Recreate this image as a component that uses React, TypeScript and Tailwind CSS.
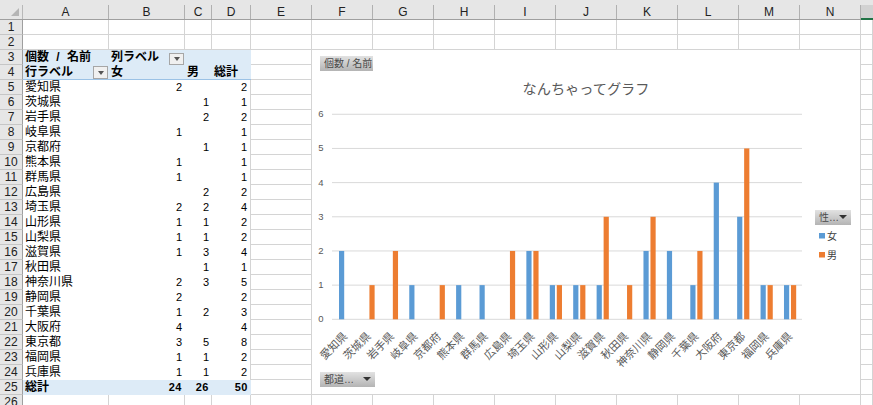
const FONT = '"Liberation Sans", "Noto Sans CJK JP", sans-serif';
const cols = ['A', 'B', 'C', 'D', 'E', 'F', 'G', 'H', 'I', 'J', 'K', 'L', 'M', 'N'];
const data: [string, number, number][] = [
  ['愛知県', 2, 0], ['茨城県', 0, 1], ['岩手県', 0, 2], ['岐阜県', 1, 0], ['京都府', 0, 1],
  ['熊本県', 1, 0], ['群馬県', 1, 0], ['広島県', 0, 2], ['埼玉県', 2, 2], ['山形県', 1, 1],
  ['山梨県', 1, 1], ['滋賀県', 1, 3], ['秋田県', 0, 1], ['神奈川県', 2, 3], ['静岡県', 2, 0],
  ['千葉県', 1, 2], ['大阪府', 4, 0], ['東京都', 3, 5], ['福岡県', 1, 1], ['兵庫県', 1, 1],
];
const GRID = 'grid grid-cols-[23px_86px_76px_27px_39px_61px_repeat(9,61px)_12px] grid-rows-[15px] h-[15px] leading-[15px]';
const line = 'border-r border-b border-[#d4d4d4]';
const total = 'bg-[#ddebf7] font-bold text-[11px] tracking-[0.5px]';

function RowNum({ n }: { n: number }) {
  return (
    <div className="bg-[#e6e6e6] border-r border-b border-r-[#9f9f9f] border-b-[#c6c6c6] text-center text-[12px] text-[#222]">
      {n}
    </div>
  );
}

function Blanks() {
  return (
    <>
      {Array.from({ length: 11 }).map((_, i) => (
        <div key={i} className={line} />
      ))}
    </>
  );
}

function FilterBtn({ cls }: { cls: string }) {
  return (
    <span className={`absolute right-[1px] w-[15px] bg-[#f0f0f0] border border-[#a6a6a6] flex items-center justify-center ${cls}`}>
      <span className="w-0 h-0 border-x-[3px] border-x-transparent border-t-[4px] border-t-[#555]" />
    </span>
  );
}

function Num({ v, cls = '' }: { v: number | string; cls?: string }) {
  return <div className={`text-right pr-[3px] text-[11px] ${cls}`}>{v === 0 ? '' : v}</div>;
}

function ChartBtn({ label, arrow, cls }: { label: string; arrow?: boolean; cls: string }) {
  return (
    <div className={`absolute h-[15px] bg-linear-to-b from-[#e2e2e2] to-[#b4b4b4] text-[#4a4a4a] text-[10px] leading-[15px] flex items-center pl-[4px] ${cls}`}>
      <span className="whitespace-pre">{label}</span>
      {arrow && (
        <span className="absolute right-[4px] top-[5px] w-0 h-0 border-x-[4px] border-x-transparent border-t-[4px] border-t-[#333]" />
      )}
    </div>
  );
}

function Chart() {
  const base = 319.3;
  const step = 34.17;
  return (
    <div className="absolute left-[311px] top-[49px] w-[550px] h-[346px] bg-white border border-[#d4d4d4]">
      <svg className="absolute -left-px -top-px" width="550" height="346" viewBox="311 49 550 346" style={{ fontFamily: FONT }}>
        <text x="586" y="94" textAnchor="middle" fontSize="14.2" fill="#595959">なんちゃってグラフ</text>
        {[0, 1, 2, 3, 4, 5, 6].map((v) => (
          <g key={v}>
            <line x1="332" x2="802" y1={base - v * step} y2={base - v * step} stroke="#d9d9d9" strokeWidth="1" />
            <text x="321" y={base - v * step + 3} textAnchor="middle" fontSize="9.5" fill="#595959">{v}</text>
          </g>
        ))}
        {data.map(([name, f, m], i) => {
          const x = 339 + 23.42 * i;
          return (
            <g key={name}>
              {f > 0 && <rect x={x} y={base - f * step} width="5.2" height={f * step} fill="#5b9bd5" />}
              {m > 0 && <rect x={x + 7} y={base - m * step} width="5.2" height={m * step} fill="#ed7d31" />}
              <text
                x={x + 9}
                y={337}
                textAnchor="end"
                fontSize="11"
                fill="#595959"
                transform={`rotate(-45 ${x + 9} 337)`}
              >
                {name}
              </text>
            </g>
          );
        })}
        <rect x="819" y="233" width="6" height="5.5" fill="#5b9bd5" />
        <text x="827" y="239.5" fontSize="10" fill="#404040">女</text>
        <rect x="819" y="252" width="6" height="5.5" fill="#ed7d31" />
        <text x="827" y="258.5" fontSize="10" fill="#404040">男</text>
      </svg>
      <ChartBtn label="個数 / 名前" cls="left-[8px] top-[6px] w-[53px]" />
      <ChartBtn label="都道…" arrow cls="left-[8px] top-[322px] w-[55px]" />
      <ChartBtn label="性…" arrow cls="left-[503px] top-[160px] w-[36px]" />
    </div>
  );
}

export default function App() {
  return (
    <div
      className="relative w-[873px] h-[405px] overflow-hidden bg-white text-black text-[12px] leading-[15px]"
      style={{ fontFamily: FONT }}
    >
      {/* column header */}
      <div className="grid grid-cols-[23px_86px_76px_27px_39px_61px_repeat(9,61px)_12px] h-[20px] bg-[#e6e6e6] border-b border-[#9f9f9f]">
        <div className="relative border-r border-[#b8b8b8] mt-[5px]">
          <span className="absolute right-[3px] bottom-[3px] w-0 h-0 border-l-[8px] border-l-transparent border-b-[8px] border-b-[#b5b5b5]" />
        </div>
        {cols.map((c) => (
          <div key={c} className="mt-[5px] border-r border-[#b0b0b0] text-center text-[#222] leading-[14px]">
            {c}
          </div>
        ))}
        <div className="mt-[5px] -mb-px bg-[#d2d2d2] border-b-2 border-[#217346]" />
      </div>

      {/* rows 1, 2 */}
      {[1, 2].map((n) => (
        <div key={n} className={GRID}>
          <RowNum n={n} />
          <div className={line} />
          <div className={line} />
          <div className={line} />
          <div className={line} />
          <Blanks />
        </div>
      ))}

      {/* pivot header */}
      <div className={GRID}>
        <RowNum n={3} />
        <div className="bg-[#ddebf7] font-bold pl-[2px] whitespace-pre [word-spacing:4px]">個数 / 名前</div>
        <div className="relative bg-[#ddebf7] font-bold pl-[2px]">
          列ラベル
          <FilterBtn cls="top-[3px] h-[12px]" />
        </div>
        <div className="bg-[#ddebf7]" />
        <div className="bg-[#ddebf7]" />
        <Blanks />
      </div>
      <div className={GRID}>
        <RowNum n={4} />
        <div className="relative bg-[#ddebf7] font-bold pl-[2px] border-b border-[#9bc2e6]">
          行ラベル
          <FilterBtn cls="top-[1px] h-[13px]" />
        </div>
        <div className="bg-[#ddebf7] font-bold pl-[2px] border-b border-[#9bc2e6]">女</div>
        <div className="bg-[#ddebf7] font-bold pl-[2px] border-b border-[#9bc2e6]">男</div>
        <div className="bg-[#ddebf7] font-bold pl-[2px] border-b border-[#9bc2e6]">総計</div>
        <Blanks />
      </div>

      {/* data */}
      {data.map(([name, f, m], i) => (
        <div key={name} className={GRID}>
          <RowNum n={i + 5} />
          <div className="pl-[2px] whitespace-nowrap">{name}</div>
          <Num v={f} />
          <Num v={m} />
          <Num v={f + m} cls="border-r border-[#d4d4d4]" />
          <Blanks />
        </div>
      ))}

      {/* total */}
      <div className={GRID}>
        <RowNum n={25} />
        <div className="bg-[#ddebf7] font-bold pl-[2px]">総計</div>
        <Num v={24} cls={total} />
        <Num v={26} cls={total} />
        <Num v={50} cls={total} />
        <Blanks />
      </div>

      {/* row 26 */}
      <div className={GRID}>
        <RowNum n={26} />
        <div className={line} />
        <div className={line} />
        <div className={line} />
        <div className={line} />
        <Blanks />
      </div>

      <Chart />
    </div>
  );
}
